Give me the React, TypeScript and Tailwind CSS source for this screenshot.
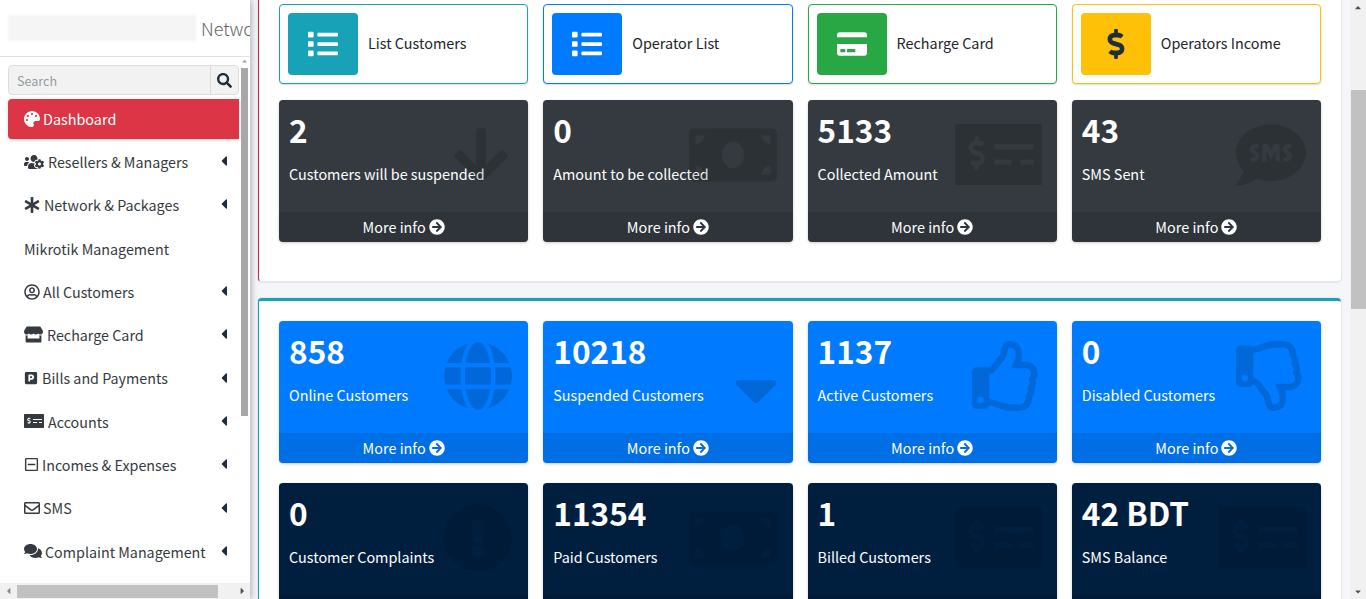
import { FaPalette, FaUsersCog, FaAsterisk, FaRegUserCircle, FaStore, FaParking, FaMoneyCheckAlt, FaRegMinusSquare, FaRegEnvelope, FaComments, FaList, FaCreditCard, FaDollarSign, FaArrowCircleRight, FaCaretLeft, FaCaretRight, FaCaretUp, FaCaretDown, FaSearch, FaArrowDown, FaMoneyBill, FaGlobe, FaRegThumbsUp, FaRegThumbsDown, FaSms, FaExclamationCircle } from 'react-icons/fa'
import type { IconType } from 'react-icons'

// latin glyphs of this family are the closest to the screenshot's font, but run larger
const font = { fontFamily: '"Noto Sans CJK SC", "Noto Sans", sans-serif' }

const menu: { label: string; icon?: IconType; iconClass?: string; caret?: boolean }[] = [
  { label: 'Resellers & Managers', icon: FaUsersCog, iconClass: 'text-[20px] mr-[4px]', caret: true },
  { label: 'Network & Packages', icon: FaAsterisk, iconClass: 'text-[16px] mr-[4px]', caret: true },
  { label: 'Mikrotik Management' },
  { label: 'All Customers', icon: FaRegUserCircle, iconClass: 'text-[16px] mr-[3px]', caret: true },
  { label: 'Recharge Card', icon: FaStore, iconClass: 'text-[19px] mr-[4px]', caret: true },
  { label: 'Bills and Payments', icon: FaParking, iconClass: 'text-[14px] mr-[4px]', caret: true },
  { label: 'Accounts', icon: FaMoneyCheckAlt, iconClass: 'text-[20px] mr-[4px]', caret: true },
  { label: 'Incomes & Expenses', icon: FaRegMinusSquare, iconClass: 'text-[15px] mr-[3px]', caret: true },
  { label: 'SMS', icon: FaRegEnvelope, iconClass: 'text-[16px] mr-[3px]', caret: true },
  { label: 'Complaint Management', icon: FaComments, iconClass: 'text-[18px] mr-[3px]', caret: true },
]

const shortcuts = [
  { label: 'List Customers', icon: FaList, border: 'border-[#17a2b8]', bg: 'bg-[#17a2b8] text-white' },
  { label: 'Operator List', icon: FaList, border: 'border-[#007bff]', bg: 'bg-[#007bff] text-white' },
  { label: 'Recharge Card', icon: FaCreditCard, border: 'border-[#28a745]', bg: 'bg-[#28a745] text-white' },
  { label: 'Operators Income', icon: FaDollarSign, border: 'border-[#ffc107]', bg: 'bg-[#ffc107] text-[#1f2d3d]' },
]

type Stat = { value: string; label: string; icon: IconType; iconClass?: string; stretch?: boolean }

const billClass = 'text-[88px] right-[16px] top-[11px]'
const checkClass = 'h-[61px] w-[87px] right-[15px] top-[24px]'

const darkStats: Stat[] = [
  { value: '2', label: 'Customers will be suspended', icon: FaArrowDown, iconClass: 'text-[62px] right-[16px] top-[24px]' },
  { value: '0', label: 'Amount to be collected', icon: FaMoneyBill, iconClass: billClass },
  { value: '5133', label: 'Collected Amount', icon: FaMoneyCheckAlt, iconClass: checkClass, stretch: true },
  { value: '43', label: 'SMS Sent', icon: FaSms, iconClass: 'text-[70px] right-[15px] top-[20px]' },
]

const blueStats: Stat[] = [
  { value: '858', label: 'Online Customers', icon: FaGlobe },
  { value: '10218', label: 'Suspended Customers', icon: FaCaretDown, iconClass: 'text-[70px] right-[2px] top-[33px]' },
  { value: '1137', label: 'Active Customers', icon: FaRegThumbsUp },
  { value: '0', label: 'Disabled Customers', icon: FaRegThumbsDown },
]

const navyStats: Stat[] = [
  { value: '0', label: 'Customer Complaints', icon: FaExclamationCircle },
  { value: '11354', label: 'Paid Customers', icon: FaMoneyBill, iconClass: billClass },
  { value: '1', label: 'Billed Customers', icon: FaMoneyCheckAlt, iconClass: checkClass, stretch: true },
  { value: '42 BDT', label: 'SMS Balance', icon: FaMoneyCheckAlt, iconClass: checkClass, stretch: true },
]

function StatBox({ stat, tone, iconTone = 'text-black/15' }: { stat: Stat; tone: string; iconTone?: string }) {
  const Icon = stat.icon
  const stretchProps = stat.stretch ? { viewBox: '0 64 640 384', preserveAspectRatio: 'none' } : {}
  return (
    <div className={`relative flex h-[142px] flex-col overflow-hidden rounded-[4px] text-white shadow-[0_1px_3px_rgba(0,0,0,0.2)] ${tone}`}>
      <div className="flex-1 px-[10px] pt-[8px]">
        <div className="text-[31.6px] leading-[42px] font-bold">{stat.value}</div>
        <div className="mt-[12px] text-[14.4px] leading-[24px]">{stat.label}</div>
      </div>
      <Icon {...stretchProps} className={`absolute ${iconTone} ${stat.iconClass ?? 'text-[70px] right-[15px] top-[20px]'}`} />
      <div className="relative flex h-[30px] items-center justify-center gap-[3px] bg-black/10 text-[14.4px]">
        More info <FaArrowCircleRight className="text-[16px]" />
      </div>
    </div>
  )
}

function Sidebar() {
  return (
    <aside className="relative flex h-full w-[250px] shrink-0 flex-col overflow-hidden bg-white shadow-[2px_0_6px_rgba(0,0,0,0.25)]">
      <div className="flex h-[57px] shrink-0 items-center border-b border-[#dee2e6] pl-[8px]">
        <div className="h-[26px] w-[188px] shrink-0 bg-[#f5f5f5] blur-[1px]" />
        <span className="ml-[5px] text-[18px] font-light whitespace-nowrap text-[#666]">Network</span>
      </div>
      <div className="flex min-h-0 flex-1">
        <div className="ml-[8px] w-[231px] shrink-0 pt-[8px]">
          <div className="flex h-[30px] overflow-hidden rounded-[4px] border border-[#ddd] bg-[#f2f2f2]">
            <div className="flex-1 pl-[8px] text-[12.6px] leading-[30px] text-[#939ba2]">Search</div>
            <div className="flex w-[28px] items-center justify-center border-l border-[#ddd] text-[#1f2d3d]">
              <FaSearch className="text-[15px]" />
            </div>
          </div>
          <div className="mt-[4px] flex h-[40px] items-center rounded-l-[4px] bg-[#dc3545] pl-[16px] text-[14.4px] text-white shadow-[0_1px_3px_rgba(0,0,0,0.2)]">
            <FaPalette className="mr-[3px] text-[16px]" />
            Dashboard
          </div>
          <nav className="mt-[1px]">
            {menu.map((item) => {
              const Icon = item.icon
              return (
                <div key={item.label} className="flex h-[43.3px] items-center pr-[7px] pl-[16px] text-[14.3px] whitespace-nowrap text-[#343a40]">
                  {Icon && <Icon className={`shrink-0 ${item.iconClass}`} />}
                  <span className="flex-1">{item.label}</span>
                  {item.caret && <FaCaretLeft className="mb-[1px] text-[16px] text-[#1f2d3d]" />}
                </div>
              )
            })}
          </nav>
        </div>
        {/* sidebar vertical scrollbar */}
        <div className="flex w-[11px] shrink-0 flex-col items-center pb-[16px] text-[#a3a3a3]">
          <FaCaretUp className="h-[8px] text-[9px]" />
          <div className="mt-[3px] h-[348px] w-[7px] bg-[#a8a8a8]" />
        </div>
      </div>
      {/* sidebar horizontal scrollbar */}
      <div className="absolute right-0 bottom-0 left-0 flex h-[16px] items-center bg-[#f1f1f1] text-[#8a8a8a]">
        <FaCaretLeft className="ml-[4px] w-[9px] text-[10px]" />
        <div className="ml-[4px] h-[13px] w-[201px] bg-[#c1c1c1]" />
        <FaCaretRight className="ml-[20px] w-[9px] text-[10px] text-[#505050]" />
      </div>
    </aside>
  )
}

export default function App() {
  return (
    <div className="flex h-[599px] w-[1366px] overflow-hidden bg-[#f4f6f9]" style={font}>
      <Sidebar />
      <main className="min-w-0 flex-1 overflow-hidden pl-[8px]">
        <section className="mt-[-20px] h-[302px] w-[1083px] rounded-[4px] border border-t-0 border-r-0 border-b-[#e3e5e8] border-l-[#c9303f] bg-white px-[20px] pt-[24px] shadow-[0_0_2px_rgba(0,0,0,0.2)]">
          <div className="grid grid-cols-4 gap-x-[15px]">
            {shortcuts.map((s) => {
              const Icon = s.icon
              return (
                <div key={s.label} className={`flex h-[80px] items-center rounded-[4px] border bg-white p-[8px] shadow-[0_1px_2px_rgba(0,0,0,0.15)] ${s.border}`}>
                  <div className={`flex h-[62px] w-[70px] items-center justify-center rounded-[4px] text-[30px] ${s.bg}`}>
                    <Icon />
                  </div>
                  <span className="mb-[2px] ml-[10px] text-[14.4px] text-[#212529]">{s.label}</span>
                </div>
              )
            })}
          </div>
          <div className="mt-[16px] grid grid-cols-4 gap-x-[15px]">
            {darkStats.map((s) => <StatBox key={s.label} stat={s} tone="bg-[#343a40]" />)}
          </div>
        </section>
        <section className="mt-[16px] w-[1083px] rounded-[4px] border-t-[3px] border-l border-t-[#17a2b8] border-l-[#17a2b8] bg-white p-[20px] shadow-[0_0_2px_rgba(0,0,0,0.2)]">
          <div className="grid grid-cols-4 gap-x-[15px] gap-y-[20px]">
            {blueStats.map((s) => <StatBox key={s.label} stat={s} tone="bg-[#007bff]" />)}
            {navyStats.map((s) => <StatBox key={s.label} stat={s} tone="bg-[#001f3f]" iconTone="text-black/10" />)}
          </div>
        </section>
      </main>
      {/* page scrollbar */}
      <div className="relative flex h-full w-[16px] shrink-0 flex-col items-center bg-[#f1f1f1] text-[#505050]">
        <FaCaretUp className="mt-[3px] h-[9px] text-[10px]" />
        <div className="mt-[78px] h-[219px] w-[15px] bg-[#c1c1c1]" />
        <FaCaretDown className="mt-auto mb-[3px] h-[9px] text-[10px]" />
      </div>
    </div>
  )
}
